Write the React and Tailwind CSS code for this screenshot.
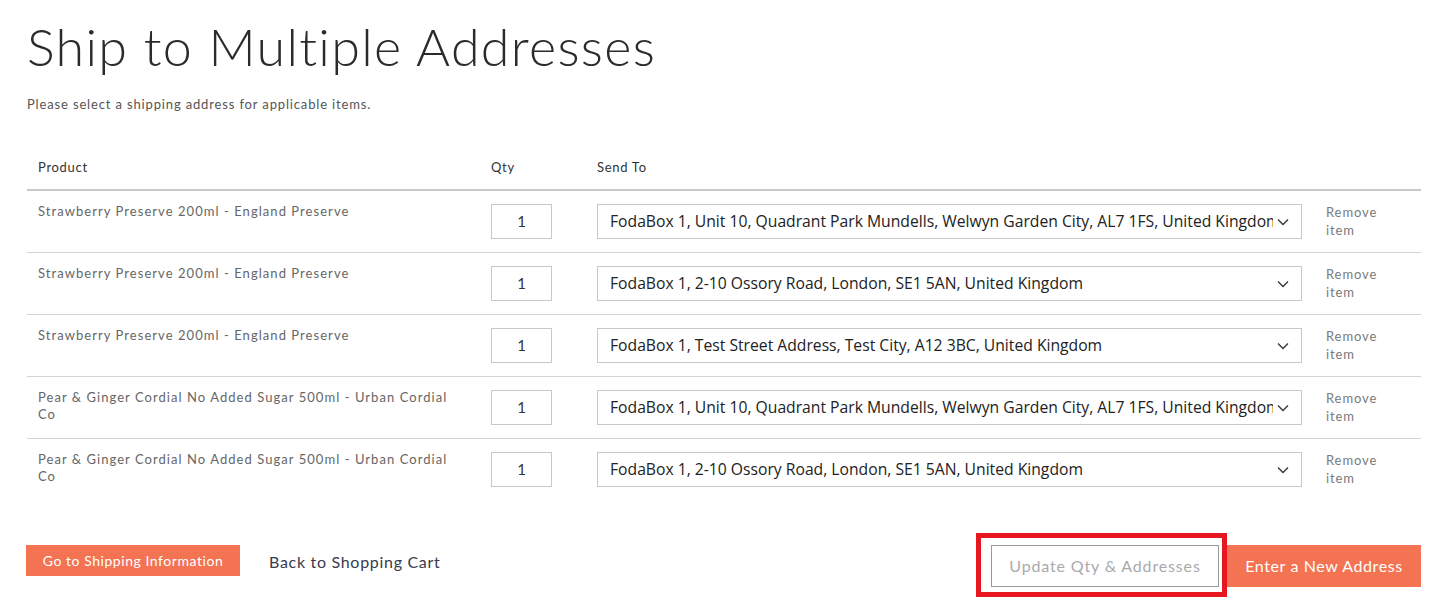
import React from "react";

const rows = [
  { product: "Strawberry Preserve 200ml - England Preserve", addr: "FodaBox 1, Unit 10, Quadrant Park Mundells, Welwyn Garden City, AL7 1FS, United Kingdom" },
  { product: "Strawberry Preserve 200ml - England Preserve", addr: "FodaBox 1, 2-10 Ossory Road, London, SE1 5AN, United Kingdom" },
  { product: "Strawberry Preserve 200ml - England Preserve", addr: "FodaBox 1, Test Street Address, Test City, A12 3BC, United Kingdom" },
  { product: "Pear & Ginger Cordial No Added Sugar 500ml - Urban Cordial Co", addr: "FodaBox 1, Unit 10, Quadrant Park Mundells, Welwyn Garden City, AL7 1FS, United Kingdom" },
  { product: "Pear & Ginger Cordial No Added Sugar 500ml - Urban Cordial Co", addr: "FodaBox 1, 2-10 Ossory Road, London, SE1 5AN, United Kingdom" },
];

const Chevron = () => (
  <svg width="12" height="8" viewBox="0 0 12 8" fill="none" stroke="#333" strokeWidth="1.3" className="shrink-0">
    <path d="M1 1.5 L6 6.5 L11 1.5" />
  </svg>
);

export default function App() {
  return (
    <div className="bg-white min-h-[613px] pl-[27px] pr-[34px] pt-[14px] font-['Lato',sans-serif] text-[#333]">
      <h1 className="text-[52px] leading-[64px] font-light tracking-[1.3px] text-[#2b2b2b]">Ship to Multiple Addresses</h1>
      <p className="mt-[18px] text-[13px] leading-[16px] text-[#555] tracking-[0.85px]">Please select a shipping address for applicable items.</p>

      <div className="mt-[34px]">
        <div className="grid grid-cols-[453px_106px_727px_1fr] border-b-2 border-[#c9c9c9] h-[45px] items-center text-[13px] text-[#333] tracking-[0.7px]">
          <div className="pl-[11px]">Product</div>
          <div className="pl-[11px]">Qty</div>
          <div className="pl-[11px]">Send To</div>
          <div></div>
        </div>
        {rows.map((r, i) => (
          <div
            key={i}
            className={`grid grid-cols-[453px_106px_727px_1fr] h-[62px] pt-[13px] ${i < rows.length - 1 ? "border-b border-[#d4d4d4]" : ""}`}
          >
            <div className="pl-[11px] pr-[12px] mt-[-1px] text-[13px] leading-[17px] text-[#666] tracking-[1.05px]">{r.product}</div>
            <div className="pl-[11px]">
              <div className="w-[61px] h-[35px] border border-[#c8c8c8] flex items-center justify-center text-[15px] text-[#333]">1</div>
            </div>
            <div className="pl-[11px] pr-[11px]">
              <div className="h-[35px] border border-[#c8c8c8] flex items-center pl-[12px] pr-[12px] gap-[4px]">
                <span className="flex-1 min-w-0 whitespace-nowrap overflow-hidden text-[15.7px] text-[#222] font-['Open_Sans',sans-serif]">{r.addr}</span>
                <Chevron />
              </div>
            </div>
            <div className="pl-[13px] mt-[-1px] text-[13px] leading-[18px] text-[#7a7a7a] tracking-[0.9px]">
              Remove<br />item
            </div>
          </div>
        ))}
      </div>

      <div className="mt-[44px] flex items-start">
        <button className="h-[31px] w-[214px] bg-[#f37352] text-white text-[14px] tracking-[0.55px] ml-[-1px]">Go to Shipping Information</button>
        <a className="ml-[29px] mt-[5px] text-[16px] text-[#3a3a4a] tracking-[0.7px]">Back to Shopping Cart</a>
        <div className="flex-1" />
        <div className="relative">
          <div className="absolute left-[-15px] top-[-12px] w-[251px] h-[64px] border-[5px] border-[#e8161f]" />
          <button className="relative h-[42px] w-[228px] border border-[#9a9a9a] bg-white text-[#aaa] text-[16px] tracking-[0.85px]">Update Qty &amp; Addresses</button>
        </div>
        <button className="h-[42px] w-[194px] ml-[8px] bg-[#f37352] text-white text-[16px] tracking-[0.6px]">Enter a New Address</button>
      </div>
    </div>
  );
}
